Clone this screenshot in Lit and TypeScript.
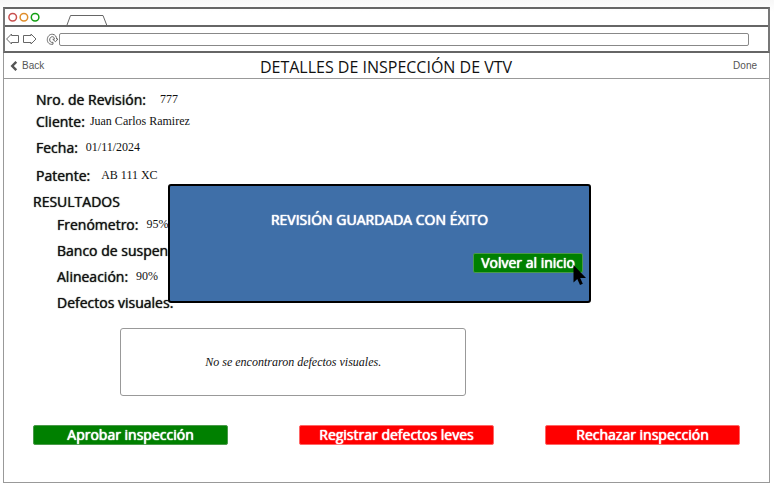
import { LitElement, html, css, svg } from "lit";
import { customElement } from "lit/decorators.js";

interface Row {
  label: string;
  value: string;
  cls: string;
}

const DETAILS: Row[] = [
  { label: "Nro. de Revisión:", value: "777", cls: "wide" },
  { label: "Cliente:", value: "Juan Carlos Ramirez", cls: "tight narrow" },
  { label: "Fecha:", value: "01/11/2024", cls: "" },
  { label: "Patente:", value: "AB 111 XC", cls: "loose" },
];

const RESULTS: Row[] = [
  { label: "Frenómetro:", value: "95%", cls: "tight" },
  { label: "Banco de suspensión:", value: "92%", cls: "" },
  { label: "Alineación:", value: "90%", cls: "" },
  { label: "Defectos visuales:", value: "", cls: "" },
];

@customElement("browser-bar")
export class BrowserBar extends LitElement {
  static styles = css`
    :host {
      display: block;
      border: 2px solid #666;
      border-left-color: #777;
      border-right-color: #777;
    }
    .tabs {
      height: 16px;
      display: flex;
      align-items: flex-end;
      border-bottom: 2px solid #666;
    }
    .tabs svg,
    .tools svg {
      display: block;
      flex: none;
    }
    .tools {
      height: 24px;
      display: flex;
      align-items: center;
      padding: 0 19px 0 1px;
    }
    .address {
      flex: 1;
      min-width: 0;
      height: 13px;
      box-sizing: border-box;
      border: 1px solid #888;
      border-radius: 2px;
      background: #fff;
      padding: 0 4px;
      font: 10px "Liberation Sans", sans-serif;
      outline: none;
    }
  `;

  render() {
    const dots = ["#c8504f", "#e08e2b", "#14a014"];
    return html`
      <div class="tabs">
        <svg width="104" height="16" viewBox="0 0 104 16" fill="none">
          ${dots.map(
            (c, i) => svg`<circle cx=${7.7 + i * 11.2} cy="8.3" r="3.8" stroke=${c} stroke-width="1.5" />`
          )}
          <path d="M62 16 L65.5 6.5 H98 L101.7 16" stroke="#666" />
        </svg>
      </div>
      <div class="tools">
        <svg width="53" height="16" viewBox="0 0 53 16" fill="none" stroke="#666" stroke-linejoin="round">
          <path d="M0.6 8 L5.5 3 V4.5 H12.5 V11.5 H5.5 V13 Z" />
          <path d="M30 8 L25 3 V4.5 H17.5 V11.5 H25 V13 Z" />
          <path
            d="M47 13.2 C43.5 14 41.2 11.5 41.3 8.6 C41.4 5.2 43.8 3 46.7 3.3 C49.3 3.6 50.6 5.8 50.6 8 L52 8 L49.5 10.7 L46.8 8.4 L48.4 8.2 C48.3 6.5 47.5 5.6 46.3 5.7 C44.6 5.8 43.6 7.2 43.7 9 C43.8 10.8 45.2 11.8 47 11.3 Z"
          />
        </svg>
        <input class="address" type="text" aria-label="Dirección" />
      </div>
    `;
  }
}

@customElement("app-root")
export class AppRoot extends LitElement {
  static styles = css`
    :host {
      display: block;
      padding: 7px 4px 4px 3px;
      background: linear-gradient(#f7f7f7, #fff 12px);
      color: #111;
      font-family: "Open Sans", "Noto Sans", sans-serif;
      font-size: 14px;
      line-height: 20px;
    }
    .page {
      position: relative;
      background: #fff;
      border: 1px solid #999;
      border-top: 0;
    }
    .header {
      display: grid;
      grid-template-columns: 1fr auto 1fr;
      align-items: center;
      height: 25px;
      padding: 0 12px 0 6px;
      border-bottom: 1px solid #999;
    }
    .title {
      margin: 0;
      padding: 2px 0 0 5px;
      font-size: 16px;
      font-weight: 400;
    }
    .nav {
      display: flex;
      align-items: center;
      gap: 4px;
      justify-self: start;
      color: #555;
      text-decoration: none;
      font: 10px/20px "Liberation Sans", Arial, sans-serif;
    }
    .nav.done {
      justify-self: end;
    }
    .body {
      padding: 11px 29px 37px;
    }
    .list {
      margin: 0;
      padding-left: 3px;
    }
    .results {
      padding-left: 24px;
    }
    .row {
      display: flex;
      gap: 8px;
      margin-top: 6px;
    }
    .row:first-child {
      margin-top: 0;
    }
    .row.tight {
      margin-top: 2px;
    }
    .results .row:first-child {
      margin-top: 3px;
    }
    .row.loose {
      margin-top: 8px;
      gap: 11px;
    }
    .row.narrow {
      gap: 5px;
    }
    .row.wide {
      gap: 14px;
    }
    dt,
    .section {
      text-shadow: 0 0 1px currentColor;
    }
    .message,
    button {
      text-shadow: 0 0 1px currentColor, 0 0 1px currentColor;
    }
    dd {
      margin: 0;
      font: 12px/18px "Liberation Serif", "Times New Roman", serif;
    }
    .section {
      margin: 6px 0 0;
      font-size: 14px;
      font-weight: 400;
    }
    .empty {
      display: flex;
      align-items: center;
      justify-content: center;
      box-sizing: border-box;
      width: 49%;
      height: 68px;
      margin: 15px 0 0 87px;
      border: 1px solid #999;
      border-radius: 3px;
      font: italic 12px/16px "Liberation Serif", "Times New Roman", serif;
    }
    .actions {
      display: grid;
      grid-template-columns: 195fr 71fr 195fr 51fr 195fr;
      margin-top: 29px;
    }
    .actions button:nth-child(2) {
      grid-column: 3;
    }
    .actions button:nth-child(3) {
      grid-column: 5;
    }
    button {
      box-sizing: border-box;
      height: 20px;
      padding: 0 7px;
      border: 1px solid #f66;
      border-radius: 2px;
      background: #f00;
      color: #fff;
      font: 14px/18px "Open Sans", "Noto Sans", sans-serif;
      white-space: nowrap;
    }
    button.ok {
      background: #008000;
      border-color: #4a9a4a;
    }
    .dialog {
      position: absolute;
      top: 131px;
      left: 164px;
      right: 178px;
      box-sizing: border-box;
      height: 119px;
      padding: 24px 6px 0;
      border: 2px solid #000;
      border-radius: 3px;
      background: #3f6fa8;
      color: #fff;
      text-align: center;
    }
    .message {
      margin: 0 0 23px;
    }
    .confirm {
      position: relative;
      display: flex;
      justify-content: flex-end;
    }
    .cursor {
      position: absolute;
      right: -3px;
      top: 12px;
      pointer-events: none;
    }
  `;

  private row(r: Row) {
    return html`<div class="row ${r.cls}"><dt>${r.label}</dt><dd>${r.value}</dd></div>`;
  }

  render() {
    return html`
      <browser-bar></browser-bar>
      <main class="page">
        <header class="header">
          <a class="nav" href="#back">
            <svg width="8" height="10" viewBox="0 0 8 10" fill="none" stroke="#555" stroke-width="2.4">
              <path d="M6.3 0.8 L2.2 5 L6.3 9.2" />
            </svg>
            Back
          </a>
          <h1 class="title">DETALLES DE INSPECCIÓN DE VTV</h1>
          <a class="nav done" href="#done">Done</a>
        </header>
        <div class="body">
          <dl class="list">${DETAILS.map((r) => this.row(r))}</dl>
          <h2 class="section">RESULTADOS</h2>
          <dl class="list results">${RESULTS.map((r) => this.row(r))}</dl>
          <div class="empty">No se encontraron defectos visuales.</div>
          <div class="actions">
            <button class="ok" type="button">Aprobar inspección</button>
            <button type="button">Registrar defectos leves</button>
            <button type="button">Rechazar inspección</button>
          </div>
        </div>
        <div class="dialog" role="dialog" aria-labelledby="message">
          <p class="message" id="message">REVISIÓN GUARDADA CON ÉXITO</p>
          <div class="confirm">
            <button class="ok" type="button">Volver al inicio</button>
            <svg class="cursor" width="13" height="20" viewBox="0 0 13 20" aria-hidden="true">
              <path d="M0.5 0 V17.5 L4.3 14 L7 20 L9.8 18.8 L7.2 13 H13 Z" fill="#000" />
            </svg>
          </div>
        </div>
      </main>
    `;
  }
}
